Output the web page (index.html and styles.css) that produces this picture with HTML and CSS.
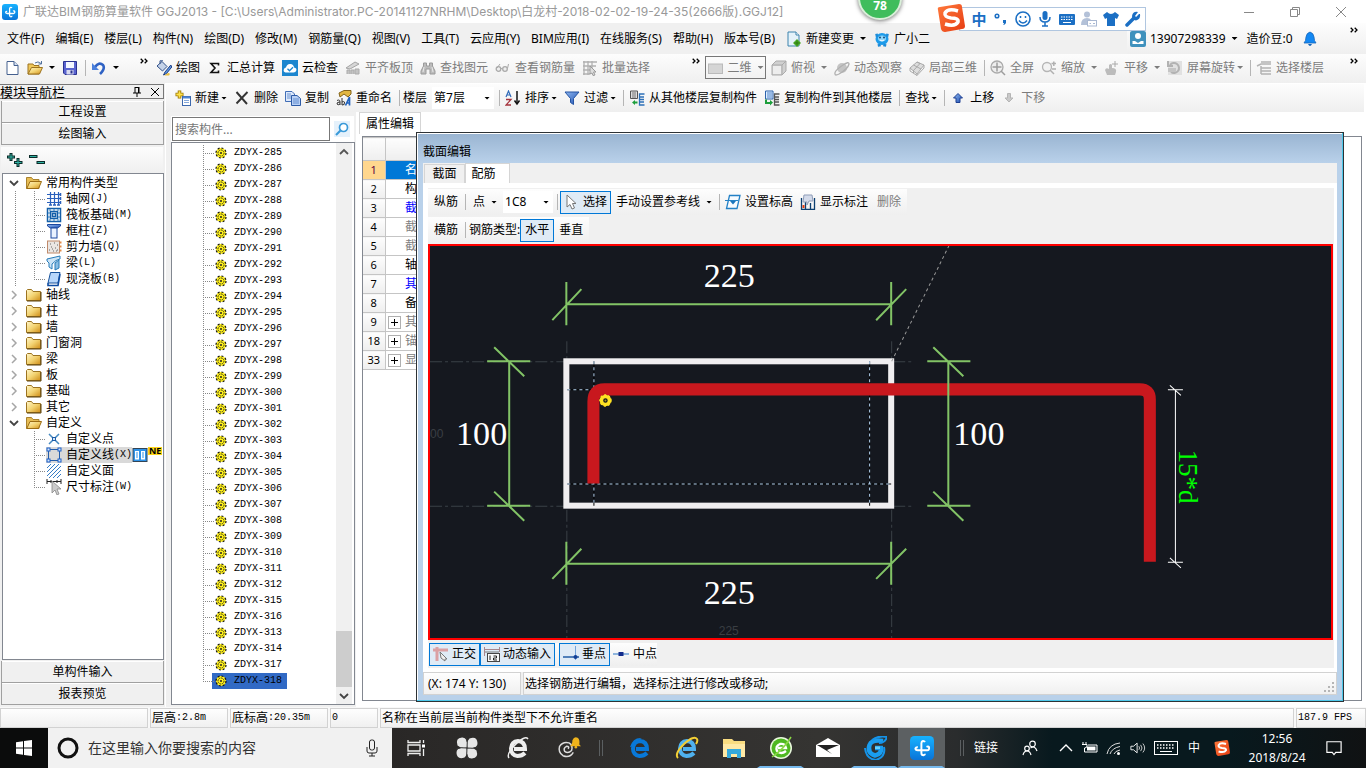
FILE: index.html
```html
<!DOCTYPE html>
<html lang="zh-CN">
<head>
<meta charset="utf-8">
<title>广联达BIM钢筋算量软件 GGJ2013</title>
<link rel="stylesheet" href="styles.css">
</head>
<body>
<svg class="defs" aria-hidden="true">
  <defs>
    <linearGradient id="gold" x1="0" y1="0" x2="1" y2="1"><stop offset="0" stop-color="#fff6c8"/><stop offset=".5" stop-color="#f3d372"/><stop offset="1" stop-color="#cf8d17"/></linearGradient>
    <linearGradient id="steel" x1="0" y1="0" x2="1" y2="1"><stop offset="0" stop-color="#8fb8f0"/><stop offset="1" stop-color="#1f4fb0"/></linearGradient>
    <linearGradient id="sky" x1="0" y1="0" x2="0" y2="1"><stop offset="0" stop-color="#17b2ff"/><stop offset="1" stop-color="#0a74d8"/></linearGradient>
    <linearGradient id="orange" x1="0" y1="0" x2="1" y2="1"><stop offset="0" stop-color="#ff7a3c"/><stop offset="1" stop-color="#e63c12"/></linearGradient>
  </defs>
  <symbol id="logo" viewBox="0 0 16 16"><rect width="16" height="16" rx="3" fill="url(#sky)"/><path d="M10 4Q9.500 3.200 8.600 3.300Q7.600 3.500 7.600 4.800V11.300Q7.600 12.800 9 12.800Q10 12.600 10 11.800M3.600 8Q3.600 9.500 5.200 9.500H11.500Q13 9.500 12.700 7.500Q12.300 6.600 11 7.200M3.600 8.200Q4 7.300 5.200 7.500" fill="none" stroke="#fff" stroke-width="1.300"/></symbol>
  <symbol id="new" viewBox="0 0 16 16"><path d="M3 1.500H10L14 5.500V14.500H3Z" fill="#fff" stroke="#45608f"/><path d="M10 1.500V5.500H14" fill="#d6e2f4" stroke="#45608f"/></symbol>
  <symbol id="open" viewBox="0 0 16 16"><path d="M1 14V4H6L7 5.500H12V14Z" fill="#f0c85a" stroke="#9c7320"/><path d="M1 14L4.500 7.500H15.500L12.500 14Z" fill="url(#gold)" stroke="#9c7320"/><path d="M8 3Q11 .5 14 3.500M14.500 1V4H11.500" fill="none" stroke="#51709c"/></symbol>
  <symbol id="save" viewBox="0 0 16 16"><path d="M1.500 1.500H14.500V14.500H3L1.500 13Z" fill="#5a64d0" stroke="#2b3290"/><rect x="4" y="2" width="8" height="6" fill="#f4f7ff"/><rect x="4.500" y="10" width="7" height="4.500" fill="#d9dcf0"/><rect x="8.500" y="10.500" width="2" height="3" fill="#2b3290"/></symbol>
  <symbol id="undo" viewBox="0 0 16 16"><path d="M4 7Q8 1.500 12 5Q14.500 8.500 9 14" fill="none" stroke="#2f62c4" stroke-width="2.600"/><path d="M1 3V10H8Z" fill="#4b80dc"/></symbol>
  <symbol id="draw" viewBox="0 0 16 16"><path d="M1 6L6 1.500L11 6.500L6.500 11Z" fill="#c4d2e8" stroke="#31518a"/><path d="M4 4V.8H7" fill="none" stroke="#31518a"/><path d="M14.800 5L9 12L7.500 15L10.500 13.500L15.800 7Z" fill="#5d94df" stroke="#1d3f86"/><path d="M12 13Q15 13 13 15.500H8" fill="#eabf43"/></symbol>
  <symbol id="sum" viewBox="0 0 16 16"><path d="M11.500 5.500V3.500H4L8 8L4 12.500H11.500V10.500" fill="none" stroke="#111" stroke-width="1.600"/></symbol>
  <symbol id="cloud" viewBox="0 0 16 16"><rect width="16" height="16" fill="#1c86cf"/><path d="M3.500 12.500Q.8 11.500 2 9Q2.500 7.500 4 7.500Q5 3.500 8.500 4Q11.500 4.300 12 7.500Q15 8 14.300 10.500Q13.800 12.500 11.500 12.500Z" fill="#fff"/><path d="M5.500 8.800L7.500 10.800L11 7.300" fill="none" stroke="#1c86cf" stroke-width="1.300"/></symbol>
  <symbol id="align" viewBox="0 0 16 16"><path d="M1 8L10 2L14 4L5 9Z" fill="#d6d6d6" stroke="#a5a5a5"/><path d="M2 14V10H5V14M6 14V10H9V14M10 14V9H14V14Z" fill="#c3c3c3" stroke="#ababab"/></symbol>
  <symbol id="find" viewBox="0 0 16 16"><path d="M3.500 3H6.500V6H9.500V3H12.500V6L15 11V14H10V9H6V14H1V11L3.500 6Z" fill="#bcbcbc" stroke="#9b9b9b"/><path d="M4 7L3 12M12 7L13 12" stroke="#e8e8e8"/></symbol>
  <symbol id="glasses" viewBox="0 0 16 16"><circle cx="3.500" cy="9" r="2.300" fill="#eee" stroke="#aaa" stroke-width="1.300"/><circle cx="10" cy="9" r="2.300" fill="#eee" stroke="#aaa" stroke-width="1.300"/><path d="M6 8.500H7.500M2 8L5 4M12.500 8.500L13.500 4" fill="none" stroke="#aaa"/></symbol>
  <symbol id="batch" viewBox="0 0 16 16"><path d="M2 1V15M6 1V15M10 1V9M1 2H15M1 6H14M1 10H8M1 14H8" stroke="#b1b1b1" stroke-width="1.300"/><path d="M8 6L14 12L11.500 12L13 15L11 15.500L10 13L8 14Z" fill="#ddd" stroke="#999"/></symbol>
  <symbol id="plane" viewBox="0 0 16 16"><rect x="1.500" y="4" width="14" height="9.500" fill="#d5d5d5" stroke="#bababa"/></symbol>
  <symbol id="cube" viewBox="0 0 16 16"><path d="M1 5L5 1H15V11L11 15H1Z" fill="#d0d0d0" stroke="#ababab"/><path d="M1 5H11V15M11 5L15 1" fill="none" stroke="#aaa"/><rect x="2" y="6" width="8" height="8" fill="#ededed"/></symbol>
  <symbol id="orbit" viewBox="0 0 16 16"><circle cx="8" cy="8" r="5" fill="#c4c4c4"/><path d="M1 14Q0 11 9 5Q15 1 15 4Q14 9 5 14Q1 16 1 14Z" fill="none" stroke="#b0b0b0" stroke-width="1.300"/></symbol>
  <symbol id="part" viewBox="0 0 16 16"><path d="M1 8L8 2L15 5L8 14Z" fill="#ddd" stroke="#aaa"/><path d="M1 8V11L8 15.500L15 8V5M4.500 5L12 9M8 2L11 3.500L4 11M8 14V15.500M4.500 10V13" fill="none" stroke="#aaa"/></symbol>
  <symbol id="full" viewBox="0 0 16 16"><circle cx="7" cy="7" r="6" fill="#eee" stroke="#aaa" stroke-width="1.300"/><path d="M7 2.500V11.500M2.500 7H11.500M11 11L15 15" stroke="#9d9d9d" stroke-width="1.500"/></symbol>
  <symbol id="scale" viewBox="0 0 16 16"><circle cx="6" cy="7" r="4.500" fill="#f3f3f3" stroke="#b5b5b5" stroke-width="1.300"/><path d="M9 10L13 14M10.500 3.500H15M12.800 1.500V6M11 9H15" stroke="#b0b0b0" stroke-width="1.500"/></symbol>
  <symbol id="pan" viewBox="0 0 16 16"><path d="M3 15L1 10Q2 7 5 9V5Q7 3 8 5V8Q13 8 12 12L11 15Z" fill="#bcbcbc"/><path d="M11 1V7M8 4H14" stroke="#aaa"/></symbol>
  <symbol id="spin" viewBox="0 0 16 16"><path d="M1 1H15V15H1Z" fill="#e1e1e1"/><path d="M3 5A5 5 0 1 1 4 12M1 1V6H6" fill="none" stroke="#b2b2b2" stroke-width="2"/><path d="M5 8H9V12H1V8" fill="#c4c4c4"/></symbol>
  <symbol id="floor" viewBox="0 0 16 16"><path d="M5 2H15M1 6L5 4H15M5 8H15M5 11H15M5 14H15M5 6V14" fill="none" stroke="#b3b3b3" stroke-width="1.500"/></symbol>
  <symbol id="doc-add" viewBox="0 0 16 16"><path d="M2 1H10L13 4V15H2Z" fill="#e4f2fa" stroke="#3c83ad"/><path d="M10 1V4H13" fill="#fff" stroke="#3c83ad"/><path d="M11 8L15 12L11 16L7 12Z" fill="#4dac27"/><path d="M11 9.500V14.500M8.500 12H13.500" stroke="#2c7b12"/></symbol>
  <symbol id="mascot" viewBox="0 0 16 16"><ellipse cx="8" cy="8" rx="6.500" ry="6" fill="#1d9bea"/><path d="M1.500 4.500L4 4M14.500 4.500L12 4M5 13L5.500 15.500M11 13L10.500 15.500" stroke="#1d8bd8" stroke-width="3"/><ellipse cx="8" cy="7.500" rx="4" ry="3" fill="#8fd6fb"/><circle cx="6" cy="6.500" r="1" fill="#124a7d"/><circle cx="10" cy="6.500" r="1" fill="#124a7d"/><path d="M6 9Q8 11 10 9" fill="none" stroke="#fff"/></symbol>
  <symbol id="user" viewBox="0 0 16 16"><rect width="16" height="16" rx="2" fill="#3f91bd"/><circle cx="8" cy="5" r="3" fill="#fff"/><path d="M2.500 13V10H5L8 12L11 10H13.500V13Z" fill="#fff"/></symbol>
  <symbol id="bell" viewBox="0 0 16 16"><path d="M2 12Q4 10 4 6Q4.500 2 8 1Q11.500 2 12 6Q12 10 14 12Z" fill="#1388f3" stroke="#1565b9" stroke-width=".8"/><path d="M6 13H10Q8 17 6 13Z" fill="#1565b9"/></symbol>
  <symbol id="add-item" viewBox="0 0 16 16"><path d="M4.500 .5V8.500M.5 4.500H8.500" stroke="#9a7600" stroke-width="3.500"/><path d="M4.500 1.300V7.700M1.300 4.500H7.700" stroke="#ffe24a" stroke-width="1.800"/><rect x="7.500" y="6.500" width="8" height="9" fill="#fff" stroke="#3c68ad"/><path d="M8 7.500H15" stroke="#4d84d5" stroke-width="2"/><path d="M9 10.500H14M9 12.500H14" stroke="#86a8da"/></symbol>
  <symbol id="del" viewBox="0 0 16 16"><path d="M2.500 2L13 14M13.500 2L2.500 13.500" stroke="#333" stroke-width="1.900"/></symbol>
  <symbol id="copy" viewBox="0 0 16 16"><path d="M.5 1.500H7L9.500 4V11.500H.5Z" fill="#dce8fb" stroke="#416eb6"/><path d="M6.500 5.500H12L15.500 8.500V15.500H6.500Z" fill="#b8d0f5" stroke="#2c5aa6"/><path d="M8 9H14M8 11H14M8 13H14M2 4H6M2 6H6M2 8H6" stroke="#4e7dc5" stroke-width=".8"/></symbol>
  <symbol id="rename" viewBox="0 0 16 16"><path d="M3 3L8 .5H15V4L12 7L8 4L4 7Z" fill="#e2b742" stroke="#83631a"/><path d="M1 10.500Q4 9 4 12V15M4 12Q.5 12 1 14Q2 15.500 4 14M6 8V15Q9 15.500 8.500 12Q7.500 11 6 12" fill="none" stroke="#333"/><path d="M9.500 15.500L13.500 7V15.500M10.500 13H13.500" fill="none" stroke="#2364be" stroke-width="1.700"/></symbol>
  <symbol id="sort" viewBox="0 0 16 16"><path d="M1 7L3.500 1L6 7M2 5H5" fill="none" stroke="#316bb9" stroke-width="1.200"/><path d="M1 9.500H6L1 15H6" fill="none" stroke="#a5333d" stroke-width="1.300"/><path d="M12 1V13" stroke="#111" stroke-width="1.500"/><path d="M9.500 10.500L12 14L14.500 10.500" fill="none" stroke="#111" stroke-width="1.500"/></symbol>
  <symbol id="funnel" viewBox="0 0 16 16"><path d="M1 2H15L9.500 8.500V14.500L6.500 12.500V8.500Z" fill="url(#steel)" stroke="#2453a2"/></symbol>
  <symbol id="floor-in" viewBox="0 0 16 16"><path d="M1.500 1H8.500V8.500H1.500Z" fill="#ddd" stroke="#555"/><path d="M3 3H7M3 5H7M3 7H7" stroke="#777"/><path d="M15.500 4H10.500V15H15.500M10 7H15M10 9.500H15M10 12H15" fill="none" stroke="#2d70b8" stroke-width="1.300"/><path d="M3 12.500L6 10V11.500H8.500V13.500H6V15Z" fill="#1e9f3c"/></symbol>
  <symbol id="floor-out" viewBox="0 0 16 16"><path d="M1.500 1H9V9H1.500Z" fill="#dfeeff" stroke="#2c62ac"/><path d="M3 3H8M3 5H8M3 7H8" stroke="#4e83c9"/><path d="M15.500 4H10.500V15H15.500M10.500 7H15M10.500 9.500H15M10.500 12H15" fill="none" stroke="#555" stroke-width="1.300"/><path d="M9 12.500L6 10V12H3V9.500H1V14H6V15.500Z" fill="#1e9f3c"/></symbol>
  <symbol id="up" viewBox="0 0 16 16"><path d="M8 3.500L12.500 8H10V12.500H6V8H3.500Z" fill="url(#steel)" stroke="#1d3f92"/></symbol>
  <symbol id="down" viewBox="0 0 16 16"><path d="M8 12L12 8H9.500V3.500H6.500V8H4Z" fill="#c9c9c9" stroke="#b5b5b5"/></symbol>
  <symbol id="folder-open" viewBox="0 0 16 16"><path d="M.5 13.500V2.500H5.500L7 4.500H13V13.500Z" fill="#e7bd55" stroke="#a9822e"/><path d="M.8 13.500L4 6.500H15.500L12.500 13.500Z" fill="url(#gold)" stroke="#9c6d14"/></symbol>
  <symbol id="folder" viewBox="0 0 16 16"><path d="M.5 3.500L1.500 2.500H5.500L7 4.500H14.500V13.500H.5Z" fill="url(#gold)" stroke="#9c7320"/><path d="M1 14H15V5" fill="none" stroke="#5d430d"/></symbol>
  <symbol id="grid" viewBox="0 0 16 16"><path d="M4.500 1V14M8.500 1V14M12.500 1V14M1 3.500H15M1 7.500H15M1 11.500H15" stroke="#2a60bc" stroke-width="1.200"/><path d="M3 14H6M7 14H10M11 14H14M14.500 2V5M14.500 6V9M14.500 10V13" stroke="#2a60bc" stroke-width="1.500"/></symbol>
  <symbol id="raft" viewBox="0 0 16 16"><path d="M1.500 1.500H14.500V14.500H1.500ZM4.500 4.500H11.500V11.500H4.500ZM6.500 6.500H9.500V9.500H6.500Z" fill="none" stroke="#145fa8" stroke-width="1.500"/><path d="M3 3H13V13H3Z" fill="none" stroke="#2b7ec4" stroke-dasharray="2 2"/></symbol>
  <symbol id="column" viewBox="0 0 16 16"><path d="M1.500 1.500H14.500V3L11.500 5H4.500L1.500 3Z" fill="url(#steel)" stroke="#1b48a0"/><rect x="5" y="5" width="6" height="10" fill="#e9f2ff" stroke="#1b48a0"/></symbol>
  <symbol id="wall" viewBox="0 0 16 16"><rect x="1.500" y="2" width="12" height="12" fill="#eae6e3" stroke="#c08a6a"/><path d="M4 5H5M8 4H9M11 6H12M5 8H6M9 9H10M3 11H4M7 12H8M11 11H12M6 10H7M10 12H11" stroke="#666"/><path d="M14 3.500H15.500M14 7.500H15.500M14 11.500H15.500" stroke="#e38b48" stroke-width="2"/></symbol>
  <symbol id="beam" viewBox="0 0 16 16"><path d="M1 4L14 1V4L10 5.500L6 9V14L3 12V8L1 6Z" fill="#cce4f6" stroke="#277bb8"/><path d="M9 8L13 5V13L9 15Z" fill="#89bde3" stroke="#277bb8"/></symbol>
  <symbol id="slab" viewBox="0 0 16 16"><path d="M4.500 1.500H14L12 12H2Z" fill="#b7d6fb" stroke="#16519b"/><path d="M2 12V14.500H12L14 3" fill="none" stroke="#0d4ba2" stroke-width="1.600"/></symbol>
  <symbol id="cross" viewBox="0 0 16 16"><path d="M3 3L13 13M13 3L3 13" stroke="#478ac0" stroke-width="1.500"/><rect x="6.500" y="6.500" width="3" height="3" fill="#cfe5fa" stroke="#1d5da8"/></symbol>
  <symbol id="line" viewBox="0 0 16 16"><rect x="2.500" y="2.500" width="11" height="11" fill="#d9d9d9" stroke="#265da8"/><g fill="#d5e6fa" stroke="#1b5fc8"><rect x="1" y="1" width="3" height="3"/><rect x="12" y="1" width="3" height="3"/><rect x="1" y="12" width="3" height="3"/><rect x="12" y="12" width="3" height="3"/></g></symbol>
  <symbol id="hatch" viewBox="0 0 16 16"><path d="M1 5L5 1M1 9L9 1M1 13L13 1M3 15L15 3M7 15L15 7M11 15L15 11" stroke="#357cc5"/></symbol>
  <symbol id="dim" viewBox="0 0 16 16"><path d="M1 0V5M15 0V5M1 2.500H15M5 1V4M11 1V4" stroke="#222"/><path d="M6 2V14L9 11L11 16L13 15L11 10H15Z" fill="#ccc" stroke="#888" stroke-width=".8"/></symbol>
  <symbol id="gear" viewBox="0 0 12 12"><circle cx="6" cy="6" r="5" fill="#fff01a" stroke="#111" stroke-width="1.200" stroke-dasharray="2 1.900"/><circle cx="6" cy="6" r="3" fill="none" stroke="#222" stroke-width=".9" stroke-dasharray="1.600 .7"/><circle cx="6" cy="6" r="1" fill="#222"/></symbol>
  <symbol id="arrow" viewBox="0 0 16 16"><path d="M3 1V13L6 10.500L8 15L10.500 14L8.500 9.500H12Z" fill="#fff" stroke="#777"/></symbol>
  <symbol id="level" viewBox="0 0 16 16"><path d="M4.500 1.500H15L12 14.500H1.500Z" fill="#f7fbff" stroke="#2381c6" stroke-width="1.300"/><path d="M0 6.500H13" stroke="#2381c6"/><path d="M5 7H11L8 10.500Z" fill="#1a75bd"/></symbol>
  <symbol id="mark" viewBox="0 0 16 16"><path d="M1.500 4V15.500H14.500V4M5.500 8V15M10.500 9V15" fill="none" stroke="#0c3f70" stroke-width="1.300"/><path d="M4 1H12L13 7H9L7 11V8H3Z" fill="#d3daea" stroke="#8f9db8"/><rect x="2.500" y="11" width="2" height="3" fill="#de3b12"/></symbol>
  <symbol id="ortho" viewBox="0 0 16 16"><path d="M4 1V15M0 4H15" stroke="#dba0a3" stroke-width="3"/><path d="M7 6L14 13L12 13V15L8 12Z" fill="#eee" stroke="#777"/></symbol>
  <symbol id="dyn" viewBox="0 0 16 16"><path d="M.5 1V10M15.500 1V6M.5 3.500H15.500" stroke="#a9868c"/><path d="M1 6H15" stroke="#777"/><rect x="3.500" y="7.500" width="12" height="8" fill="#f9f9f9" stroke="#444"/><path d="M6 9.500V14M9.500 10H12.500V12H9.500V14H13" fill="none" stroke="#222"/></symbol>
  <symbol id="perp" viewBox="0 0 16 16"><path d="M12.500 0V14" stroke="#73a4da"/><path d="M0 11H16" stroke="#235da5" stroke-width="1.500"/><circle cx="12.500" cy="11" r="2" fill="#123f96"/></symbol>
  <symbol id="mid" viewBox="0 0 16 16"><path d="M0 8H16" stroke="#6d9fd4" stroke-width="1.500"/><rect x="5.500" y="6" width="5" height="4" fill="#132c8c"/></symbol>
  <symbol id="lens" viewBox="0 0 16 16"><rect width="16" height="16" fill="#e5f1fb"/><circle cx="9.500" cy="6.500" r="4" fill="#fff" stroke="#3a9ad9" stroke-width="1.700"/><path d="M6.500 9.500L2 14" stroke="#3a9ad9" stroke-width="2.200"/></symbol>
  <symbol id="chev-down" viewBox="0 0 10 10"><path d="M1 3L5 7L9 3" fill="none" stroke="#444" stroke-width="1.800"/></symbol>
  <symbol id="chev-up" viewBox="0 0 10 10"><path d="M1 7L5 3L9 7" fill="none" stroke="#555" stroke-width="1.800"/></symbol>
  <symbol id="chev-right" viewBox="0 0 10 10"><path d="M3 1L7 5L3 9" fill="none" stroke="#a6a6a6" stroke-width="1.500"/></symbol>
  <symbol id="more" viewBox="0 0 8 6"><path d="M.7 .7L3 3L.7 5.300M4.700 .7L7 3L4.700 5.300" fill="none" stroke="#000" stroke-width="1.300"/></symbol>
  <symbol id="sogou" viewBox="0 0 28 28"><path d="M1 6Q0 3 3 3L22 0Q25 0 25 3L28 22Q28 25 25 25L8 28Q5 28 4 25Z" fill="url(#orange)"/><path d="M21 7Q11 4 8 9Q7 13 14 14Q22 14 21 18Q18 23 8 20" fill="none" stroke="#fff" stroke-width="3.500"/></symbol>
  <symbol id="browser-e" viewBox="0 0 24 24"><path d="M19 17Q16 20 11.500 20Q5 19 5 12.500Q5.500 5.500 12 5Q19 5.500 19 13H8" fill="none" stroke="currentColor" stroke-width="4"/></symbol>
</svg>

<header class="titlebar">
  <svg class="i16"><use href="#logo"/></svg>
  <h1>广联达BIM钢筋算量软件 GGJ2013 - [C:\Users\Administrator.PC-20141127NRHM\Desktop\白龙村-2018-02-02-19-24-35(2666版).GGJ12]</h1>
  <div class="winctl">
    <button aria-label="最小化"><svg viewBox="0 0 12 12"><path d="M1 6.500H11"/></svg></button>
    <button aria-label="还原"><svg viewBox="0 0 12 12"><path d="M1.500 3.500H8.500V10.500H1.500ZM3.500 3.500V1.500H10.500V8.500H8.500"/></svg></button>
    <button aria-label="关闭"><svg viewBox="0 0 12 12"><path d="M1 1L11 11M11 1L1 11"/></svg></button>
  </div>
</header>

<nav class="menubar">
  <button>文件(F)</button><button>编辑(E)</button><button>楼层(L)</button><button>构件(N)</button><button>绘图(D)</button><button>修改(M)</button><button>钢筋量(Q)</button><button>视图(V)</button><button>工具(T)</button><button>云应用(Y)</button><button>BIM应用(I)</button><button>在线服务(S)</button><button>帮助(H)</button><button>版本号(B)</button>
  <button class="tool"><svg class="i16"><use href="#doc-add"/></svg>新建变更<i class="caret"></i></button>
  <button class="tool mascot"><svg class="i16"><use href="#mascot"/></svg>广小二</button>
  <div class="account">
    <button class="tool"><svg class="i16"><use href="#user"/></svg>13907298339<i class="caret"></i></button>
    <button>造价豆:0</button>
    <button aria-label="通知"><svg class="i16"><use href="#bell"/></svg></button>
    <button class="more" aria-label="更多"><svg><use href="#more"/></svg></button>
  </div>
</nav>

<div class="toolrow">
  <div class="strip quick">
    <button class="tool" aria-label="新建"><svg class="i16"><use href="#new"/></svg></button>
    <button class="tool" aria-label="打开"><svg class="i16"><use href="#open"/></svg><i class="caret"></i></button>
    <button class="tool" aria-label="保存"><svg class="i16"><use href="#save"/></svg></button>
    <i class="sep"></i>
    <button class="tool" aria-label="撤销"><svg class="i16"><use href="#undo"/></svg><i class="caret"></i></button>
    <button class="more" aria-label="更多"><svg><use href="#more"/></svg></button>
  </div>
  <div class="strip actions">
    <button class="tool"><svg class="i16"><use href="#draw"/></svg>绘图</button>
    <button class="tool"><svg class="i16"><use href="#sum"/></svg>汇总计算</button>
    <button class="tool"><svg class="i16"><use href="#cloud"/></svg>云检查</button>
    <button class="tool" disabled><svg class="i16"><use href="#align"/></svg>平齐板顶</button>
    <button class="tool" disabled><svg class="i16"><use href="#find"/></svg>查找图元</button>
    <button class="tool" disabled><svg class="i16"><use href="#glasses"/></svg>查看钢筋量</button>
    <button class="tool" disabled><svg class="i16"><use href="#batch"/></svg>批量选择</button>
    <button class="more" aria-label="更多"><svg><use href="#more"/></svg></button>
  </div>
  <div class="strip views">
    <button class="tool framed" disabled><svg class="i16"><use href="#plane"/></svg>二维<i class="caret"></i></button>
    <button class="tool" disabled><svg class="i16"><use href="#cube"/></svg>俯视<i class="caret"></i></button>
    <button class="tool" disabled><svg class="i16"><use href="#orbit"/></svg>动态观察</button>
    <button class="tool" disabled><svg class="i16"><use href="#part"/></svg>局部三维</button>
    <i class="sep"></i>
    <button class="tool" disabled><svg class="i16"><use href="#full"/></svg>全屏</button>
    <button class="tool" disabled><svg class="i16"><use href="#scale"/></svg>缩放<i class="caret"></i></button>
    <button class="tool" disabled><svg class="i16"><use href="#pan"/></svg>平移<i class="caret"></i></button>
    <button class="tool tight" disabled><svg class="i16"><use href="#spin"/></svg>屏幕旋转<i class="caret"></i></button>
    <i class="sep"></i>
    <button class="tool" disabled><svg class="i16"><use href="#floor"/></svg>选择楼层</button>
    <button class="more" aria-label="更多"><svg><use href="#more"/></svg></button>
  </div>
</div>

<main class="work">
  <aside class="modules">
    <div class="dock"><h2>模块导航栏</h2>
      <button aria-label="固定"><svg viewBox="0 0 10 10"><path d="M3 0V6M7 0V6M3 .5H7M1 6H9M5 6V10M6.500 0V6" fill="none" stroke="#000"/></svg></button>
      <button aria-label="关闭"><svg viewBox="0 0 10 10"><path d="M1 1L9 9M9 1L1 9" stroke="#000"/></svg></button>
    </div>
    <button class="bar">工程设置</button>
    <button class="bar">绘图输入</button>
    <div class="treetools">
      <button aria-label="全部展开"><svg viewBox="0 0 18 16"><g fill="none"><path d="M5 1V9M1 5H9M12 6V15M8 10.500H16.500" stroke="#0b2b29" stroke-width="3"/><path d="M5 2V8M2 5H8M12 7V14M9 10.500H15.500" stroke="#2fb3a3"/></g></svg></button>
      <button aria-label="全部折叠"><svg viewBox="0 0 18 16"><g fill="none"><path d="M1 4.500H9.500M8.500 10.500H17" stroke="#0b2b29" stroke-width="3"/><path d="M2 4.500H8.500M9.500 10.500H16" stroke="#2fb3a3"/></g></svg></button>
    </div>
    <ul class="tree">
      <li><svg class="chev"><use href="#chev-down"/></svg><svg class="i16"><use href="#folder-open"/></svg>常用构件类型</li>
      <li class="kids lined"><ul>
        <li><svg class="i16"><use href="#grid"/></svg>轴网<span class="mono">(J)</span></li>
        <li><svg class="i16"><use href="#raft"/></svg>筏板基础<span class="mono">(M)</span></li>
        <li><svg class="i16"><use href="#column"/></svg>框柱<span class="mono">(Z)</span></li>
        <li><svg class="i16"><use href="#wall"/></svg>剪力墙<span class="mono">(Q)</span></li>
        <li><svg class="i16"><use href="#beam"/></svg>梁<span class="mono">(L)</span></li>
        <li><svg class="i16"><use href="#slab"/></svg>现浇板<span class="mono">(B)</span></li>
      </ul></li>
      <li><svg class="chev"><use href="#chev-right"/></svg><svg class="i16"><use href="#folder"/></svg>轴线</li>
      <li><svg class="chev"><use href="#chev-right"/></svg><svg class="i16"><use href="#folder"/></svg>柱</li>
      <li><svg class="chev"><use href="#chev-right"/></svg><svg class="i16"><use href="#folder"/></svg>墙</li>
      <li><svg class="chev"><use href="#chev-right"/></svg><svg class="i16"><use href="#folder"/></svg>门窗洞</li>
      <li><svg class="chev"><use href="#chev-right"/></svg><svg class="i16"><use href="#folder"/></svg>梁</li>
      <li><svg class="chev"><use href="#chev-right"/></svg><svg class="i16"><use href="#folder"/></svg>板</li>
      <li><svg class="chev"><use href="#chev-right"/></svg><svg class="i16"><use href="#folder"/></svg>基础</li>
      <li><svg class="chev"><use href="#chev-right"/></svg><svg class="i16"><use href="#folder"/></svg>其它</li>
      <li><svg class="chev"><use href="#chev-down"/></svg><svg class="i16"><use href="#folder-open"/></svg>自定义</li>
      <li class="kids"><ul>
        <li><svg class="i16"><use href="#cross"/></svg>自定义点</li>
        <li><span class="picked"><svg class="i16"><use href="#line"/></svg>自定义线<span class="mono">(X)</span></span><svg class="i16 book" viewBox="0 0 16 16"><rect x="1" y="1.500" width="14" height="13" fill="#2f93e8" stroke="#345"/><path d="M3 4H7V12.500H3ZM9 4H13V12.500H9Z" fill="#fff"/><path d="M4 6H6M4 8H6M4 10H6M10 6H12M10 8H12M10 10H12" stroke="#2f93e8"/></svg><b class="ne">NE</b></li>
        <li><svg class="i16"><use href="#hatch"/></svg>自定义面</li>
        <li><svg class="i16"><use href="#dim"/></svg>尺寸标注<span class="mono">(W)</span></li>
      </ul></li>
    </ul>
    <button class="bar">单构件输入</button>
    <button class="bar">报表预览</button>
  </aside>

  <section class="editor">
    <div class="strip edit">
      <button class="tool tight"><svg class="i16"><use href="#add-item"/></svg>新建<i class="caret"></i></button>
      <button class="tool"><svg class="i16"><use href="#del"/></svg>删除</button>
      <button class="tool"><svg class="i16"><use href="#copy"/></svg>复制</button>
      <button class="tool"><svg class="i16"><use href="#rename"/></svg>重命名</button>
      <i class="sep"></i>
      <label for="storey">楼层</label>
      <span class="combo storey"><select id="storey"><option>第7层</option></select><i class="caret"></i></span>
      <i class="sep"></i>
      <button class="tool tight"><svg class="i16"><use href="#sort"/></svg>排序<i class="caret"></i></button>
      <button class="tool tight"><svg class="i16"><use href="#funnel"/></svg>过滤<i class="caret"></i></button>
      <i class="sep"></i>
      <button class="tool"><svg class="i16"><use href="#floor-in"/></svg>从其他楼层复制构件</button>
      <button class="tool"><svg class="i16"><use href="#floor-out"/></svg>复制构件到其他楼层</button>
      <i class="sep"></i>
      <button class="tool tight">查找<i class="caret"></i></button>
      <i class="sep"></i>
      <button class="tool"><svg class="i16"><use href="#up"/></svg>上移</button>
      <button class="tool" disabled><svg class="i16"><use href="#down"/></svg>下移</button>
    </div>
    <div class="panes">
      <div class="parts">
        <form class="search"><input type="text" aria-label="搜索构件" placeholder="搜索构件..."><button type="button" aria-label="搜索"><svg class="i16"><use href="#lens"/></svg></button></form>
        <div class="listbox">
          <ul class="names mono">
            <li><svg><use href="#gear"/></svg><span>ZDYX-285</span></li>
            <li><svg><use href="#gear"/></svg><span>ZDYX-286</span></li>
            <li><svg><use href="#gear"/></svg><span>ZDYX-287</span></li>
            <li><svg><use href="#gear"/></svg><span>ZDYX-288</span></li>
            <li><svg><use href="#gear"/></svg><span>ZDYX-289</span></li>
            <li><svg><use href="#gear"/></svg><span>ZDYX-290</span></li>
            <li><svg><use href="#gear"/></svg><span>ZDYX-291</span></li>
            <li><svg><use href="#gear"/></svg><span>ZDYX-292</span></li>
            <li><svg><use href="#gear"/></svg><span>ZDYX-293</span></li>
            <li><svg><use href="#gear"/></svg><span>ZDYX-294</span></li>
            <li><svg><use href="#gear"/></svg><span>ZDYX-295</span></li>
            <li><svg><use href="#gear"/></svg><span>ZDYX-296</span></li>
            <li><svg><use href="#gear"/></svg><span>ZDYX-297</span></li>
            <li><svg><use href="#gear"/></svg><span>ZDYX-298</span></li>
            <li><svg><use href="#gear"/></svg><span>ZDYX-299</span></li>
            <li><svg><use href="#gear"/></svg><span>ZDYX-300</span></li>
            <li><svg><use href="#gear"/></svg><span>ZDYX-301</span></li>
            <li><svg><use href="#gear"/></svg><span>ZDYX-302</span></li>
            <li><svg><use href="#gear"/></svg><span>ZDYX-303</span></li>
            <li><svg><use href="#gear"/></svg><span>ZDYX-304</span></li>
            <li><svg><use href="#gear"/></svg><span>ZDYX-305</span></li>
            <li><svg><use href="#gear"/></svg><span>ZDYX-306</span></li>
            <li><svg><use href="#gear"/></svg><span>ZDYX-307</span></li>
            <li><svg><use href="#gear"/></svg><span>ZDYX-308</span></li>
            <li><svg><use href="#gear"/></svg><span>ZDYX-309</span></li>
            <li><svg><use href="#gear"/></svg><span>ZDYX-310</span></li>
            <li><svg><use href="#gear"/></svg><span>ZDYX-311</span></li>
            <li><svg><use href="#gear"/></svg><span>ZDYX-312</span></li>
            <li><svg><use href="#gear"/></svg><span>ZDYX-315</span></li>
            <li><svg><use href="#gear"/></svg><span>ZDYX-316</span></li>
            <li><svg><use href="#gear"/></svg><span>ZDYX-313</span></li>
            <li><svg><use href="#gear"/></svg><span>ZDYX-314</span></li>
            <li><svg><use href="#gear"/></svg><span>ZDYX-317</span></li>
            <li class="current"><svg><use href="#gear"/></svg><span>ZDYX-318</span></li>
          </ul>
          <div class="scroll"><button aria-label="向上"><svg><use href="#chev-up"/></svg></button><i class="track"></i><i class="thumb"></i><button aria-label="向下"><svg><use href="#chev-down"/></svg></button></div>
        </div>
      </div>
      <div class="props">
        <button class="proptab">属性编辑</button>
        <div class="sheet">
          <table>
            <colgroup><col class="c-no"><col class="c-exp"><col></colgroup>
            <thead><tr><th></th><th colspan="2"></th></tr></thead>
            <tbody>
              <tr class="on"><th>1</th><td></td><td>名</td></tr>
              <tr><th>2</th><td></td><td>构</td></tr>
              <tr class="blue"><th>3</th><td></td><td>截</td></tr>
              <tr class="dim"><th>4</th><td></td><td>截</td></tr>
              <tr class="dim"><th>5</th><td></td><td>截</td></tr>
              <tr><th>6</th><td></td><td>轴</td></tr>
              <tr class="blue"><th>7</th><td></td><td>其</td></tr>
              <tr><th>8</th><td></td><td>备</td></tr>
              <tr class="dim"><th>9</th><td><button class="plus" aria-label="展开"></button></td><td>其</td></tr>
              <tr class="dim"><th>18</th><td><button class="plus" aria-label="展开"></button></td><td>锚</td></tr>
              <tr class="dim"><th>33</th><td><button class="plus" aria-label="展开"></button></td><td>显</td></tr>
            </tbody>
          </table>
        </div>
      </div>
    </div>
  </section>
</main>

<footer class="status">
  <span class="s1"></span><span class="s2">层高<span class="mono">:2.8m</span></span><span class="s3">底标高<span class="mono">:20.35m</span></span><span class="s4 mono">0</span><span class="grow">名称在当前层当前构件类型下不允许重名</span><span class="s5 mono">187.9 FPS</span>
</footer>

<footer class="taskbar">
  <button class="start" aria-label="开始"><svg viewBox="0 0 16 16"><path d="M0 2.300L7 1.300V7.500H0ZM8 1.100L16 0V7.500H8ZM0 8.500H7V14.700L0 13.700ZM8 8.500H16V16L8 14.900Z" fill="#fff"/></svg></button>
  <label class="ask"><svg viewBox="0 0 22 22"><circle cx="11" cy="11" r="9" fill="none" stroke="#111" stroke-width="3"/></svg><input type="text" aria-label="搜索" placeholder="在这里输入你要搜索的内容"><svg class="mic" viewBox="0 0 14 18"><rect x="4.500" y="1" width="5" height="10" rx="2" fill="none" stroke="#222"/><path d="M2 8V12Q2 14 4 14H10Q12 14 12 12V8M7 14V17M4 17H10" fill="none" stroke="#222"/></svg></label>
  <div class="apps">
    <button aria-label="任务视图"><svg viewBox="0 0 24 24"><path d="M4 4V6.500H16V4M4 9H16V15H4ZM4 20V17.500H16V20M19.500 4V7M19.500 13V20" fill="none" stroke="#eee" stroke-width="1.300"/><rect x="18" y="8.500" width="3" height="3" fill="#fff"/></svg></button>
    <button aria-label="风扇"><svg viewBox="0 0 24 24"><g fill="#e6e6e6"><path id="fan" d="M12 11.500Q6 13 2.500 9.500Q0 2 7 1.500Q13 1 12 11.500Z"/><use href="#fan" transform="rotate(90 12 12)"/><use href="#fan" transform="rotate(180 12 12)"/><use href="#fan" transform="rotate(270 12 12)"/></g><path d="M12 12Q13 6 11 1M12 12Q18 13 23 11M12 12Q11 18 13 23M12 12Q6 11 1 13" fill="none" stroke="#333"/></svg></button>
    <button aria-label="浏览器" class="pale"><svg viewBox="0 0 24 24"><use href="#browser-e"/><path d="M3 22Q0 18 9 9Q19-1 22 3" fill="none" stroke="#eee" stroke-width="1.500"/></svg></button>
    <button aria-label="提醒"><svg viewBox="0 0 28 24"><path d="M13 13Q15 10 11 10Q7 12 9 16Q13 19 17 15Q19 9 14 6Q7 4 3 10Q1 17 7 21Q15 24 19 17" fill="none" stroke="#ddd" stroke-width="1.700"/><path d="M15 10Q18 8 18 3Q20-2 24 0Q27 2 26 8L28 10Z" fill="#f0b41c"/><circle cx="22" cy="11" r="1.500" fill="#f0b41c"/></svg></button>
    <i class="grip"></i>
    <button aria-label="Edge" class="edge"><svg viewBox="0 0 24 24"><use href="#browser-e"/><path d="M2 11Q5 1 14 2Q8 4 7 10" fill="currentColor"/></svg></button>
    <button aria-label="Internet Explorer" class="ie"><svg viewBox="0 0 24 24"><use href="#browser-e"/><path d="M3 22Q-1 18 9 8Q19-1 22 3Q23 5 21 8" fill="none" stroke="#f3cf35" stroke-width="2"/></svg></button>
    <button aria-label="文件资源管理器"><svg viewBox="0 0 24 24"><path d="M1 3H10L12 5H23V21H1Z" fill="#f9dc80"/><path d="M1 8H23V21H1Z" fill="#ffe9a5"/><path d="M5 22V13H19V22H15V18H9V22Z" fill="#35a9dc"/></svg></button>
    <button aria-label="安全浏览器" class="running green"><svg viewBox="0 0 24 24"><circle cx="12" cy="12" r="11" fill="#e9f8dc"/><circle cx="12" cy="12" r="9.500" fill="#4eb821"/><path d="M17 15Q12 19 8 15Q6 10 11 8Q16 7 17 12H9" fill="none" stroke="#fff" stroke-width="2.300"/><path d="M3 21Q15 13 22 1" fill="none" stroke="#8bda44" stroke-width="1.500"/></svg></button>
    <button aria-label="邮件"><svg viewBox="0 0 24 24"><path d="M0 9L12 2L24 9V21H0Z" fill="#fff"/><path d="M1 9H23L11 14L16 18Z" fill="#222"/></svg></button>
    <button aria-label="广联达" class="running"><svg viewBox="0 0 24 24"><path d="M20 5Q9 3 6.500 9Q4 17 12 19.500Q19 18 18 12H12" fill="none" stroke="#199df0" stroke-width="4.500"/><path d="M9 4Q16-1 24 1Q22 7 16 7M2 12Q3 23 13 24Q23 21 21 11" fill="none" stroke="#1593e8" stroke-width="2"/><path d="M12 10.500H17V13H12Z" fill="#65d1ff"/></svg></button>
    <button aria-label="钢筋算量" class="running active"><svg viewBox="0 0 16 16"><use href="#logo"/></svg></button>
  </div>
  <div class="tray">
    <i class="grip"></i><span class="links">链接</span>
    <button aria-label="人脉"><svg viewBox="0 0 16 16"><g fill="none" stroke="#fff" stroke-width="1.200"><circle cx="10.500" cy="4" r="2.800"/><circle cx="5" cy="8.500" r="2.300"/><path d="M1 15Q2 11 5 11Q8 11 9 15M8.500 8Q13 5 15 11"/></g></svg></button>
    <button aria-label="展开托盘"><svg viewBox="0 0 16 16"><path d="M2 11L8 5L14 11" fill="none" stroke="#fff" stroke-width="1.400"/></svg></button>
    <button aria-label="电池"><svg viewBox="0 0 16 16"><path d="M1 2V4M4 2V4M0 4.500H5V6Q5 8 2.500 8V12H15V5H6" fill="none" stroke="#fff"/><rect x="5" y="6.500" width="8.500" height="4" fill="#fff"/></svg></button>
    <button aria-label="网络"><svg viewBox="0 0 16 16"><path d="M1 14Q3 4 14 3M4 14Q6 8 14 6.500M8 14Q9 11 14 10" fill="none" stroke="#ddd"/><circle cx="12.500" cy="13.500" r="1.500" fill="#fff"/></svg></button>
    <button aria-label="音量"><svg viewBox="0 0 18 16"><path d="M1 6H4L8 2.500V13.500L4 10H1Z" fill="none" stroke="#fff"/><path d="M10 6Q11.500 8 10 10M12 4.500Q15 8 12 11.500M14.500 3Q18.500 8 14.500 13" fill="none" stroke="#ddd"/></svg></button>
    <button class="kb" aria-label="触摸键盘"><svg viewBox="0 0 24 14"><rect x=".5" y=".5" width="23" height="13" fill="none" stroke="#fff"/><path d="M3 4H21M3 7H21" stroke="#fff" stroke-dasharray="1.500 1.500" stroke-width="1.500"/><path d="M6 10.500H18" stroke="#fff"/></svg></button>
    <button class="lang">中</button>
    <button class="input" aria-label="搜狗输入法"><svg viewBox="0 0 28 28"><use href="#sogou"/></svg></button>
    <time class="clock">12:56<br>2018/8/24</time>
    <button class="notice" aria-label="操作中心"><svg viewBox="0 0 18 18"><path d="M1 2H17V14H11L9 16.500L7 14H1Z" fill="none" stroke="#fff" stroke-width="1.300"/></svg></button>
  </div>
</footer>

<section class="dialog" role="dialog" aria-labelledby="dlg">
  <h2 id="dlg">截面编辑</h2>
  <div class="inner">
    <div class="tabs"><button>截面</button><button class="sel">配筋</button></div>
    <div class="page">
      <div class="row"><div class="strip bars">
        <button class="flat">纵筋</button><i class="sep"></i><button class="flat pt">点<i class="caret"></i></button>
        <span class="combo rebar"><select aria-label="钢筋规格"><option>1C8</option></select><i class="caret"></i></span><i class="sep"></i>
        <button class="toggle"><svg class="i16"><use href="#arrow"/></svg>选择</button>
        <button class="flat ref">手动设置参考线<i class="caret"></i></button><i class="sep"></i>
        <button class="tool"><svg class="i16"><use href="#level"/></svg>设置标高</button>
        <button class="tool"><svg class="i16"><use href="#mark"/></svg>显示标注</button>
        <button class="flat" disabled>删除</button>
      </div></div>
      <div class="row"><div class="strip bars">
        <button class="flat">横筋</button><i class="sep near"></i><span>钢筋类型:</span><button class="toggle plain">水平</button><button class="flat">垂直</button>
      </div></div>
      <div class="canvas">
        <svg viewBox="430 246 900 391" preserveAspectRatio="xMinYMin slice">
          <g fill="none" stroke="#3a4047" stroke-dasharray="12 3 3 3"><path d="M430 361.500H911M430 505.500H911M566.500 341V637M890.500 341V637"/></g>
          <g class="ghost"><text x="430" y="438">00</text><text x="718" y="634">225</text></g>
          <rect x="566" y="361" width="324" height="144" fill="none" stroke="#f0eef0" stroke-width="6"/>
          <g fill="none" stroke="#000"><path d="M593.500 361V505M868.500 361V505M567 389.500H593M567 483.500H890"/></g>
          <g fill="none" stroke="#b4d2f0" stroke-dasharray="3 3"><path d="M593.500 361V505M868.500 361V505M567 389.500H593M567 483.500H890"/></g>
          <path d="M890.500 361L947.500 246" stroke="#999" stroke-dasharray="3 3"/>
          <path d="M593 483V401Q593 389 604 389H1138Q1148 389 1148 399V561" fill="none" stroke="#c8181e" stroke-width="12"/>
          <circle cx="605" cy="400" r="4" fill="none" stroke="#ffe223" stroke-width="3.500"/><circle cx="605" cy="400" r="5.500" fill="none" stroke="#ffe223" stroke-width="1.500" stroke-dasharray="2 2"/><circle cx="605" cy="400" r="1" fill="#a89422"/>
          <g fill="none" stroke="#82c366" stroke-width="2">
            <path d="M566 304H890M566 282V325M890 282V325M552 320L581 289M875 320L905 289"/>
            <path d="M566 563H890M566 541V584M890 541V584M552 578L581 548M875 578L905 548"/>
            <path d="M509 361V505M487 361H530M487 505H530M494 347L524 376M494 491L524 520"/>
            <path d="M947 361V505M926 361H969M926 505H969M932 347L962 376M932 491L962 520"/>
          </g>
          <path d="M1173.500 389V562M1166 389.500H1181M1166 561.500H1181M1168 385L1179 395M1168 557L1179 567" stroke="#fff"/>
          <g class="dimtext"><text x="703" y="287">225</text><text x="703" y="603">225</text><text x="456" y="445">100</text><text x="952" y="445">100</text></g>
          <text class="hook" transform="translate(1177 449) rotate(90)">15*d</text>
        </svg>
      </div>
      <div class="row"><div class="strip snaps">
        <button class="toggle"><svg class="i16"><use href="#ortho"/></svg>正交</button><button class="toggle"><svg class="i16"><use href="#dyn"/></svg>动态输入</button><button class="toggle gap"><svg class="i16"><use href="#perp"/></svg>垂点</button><button class="tool"><svg class="i16"><use href="#mid"/></svg>中点</button>
      </div></div>
    </div>
    <div class="dstatus"><span class="pos">(X: 174 Y: 130)</span><span class="grow">选择钢筋进行编辑，选择标注进行修改或移动;<svg class="size" viewBox="0 0 12 12"><path d="M8 0H10V2H8ZM4 4H6V6H4ZM8 4H10V6H8ZM0 8H2V10H0ZM4 8H6V10H4ZM8 8H10V10H8Z" fill="#b5b5b5"/></svg></span></div>
  </div>
</section>

<div class="badge">78</div>
<div class="ime">
  <svg class="s" viewBox="0 0 28 28"><use href="#sogou"/></svg>
  <div class="imebar">
    <button>中</button>
    <button aria-label="标点"><svg viewBox="0 0 16 16"><circle cx="4" cy="5" r="1.800" fill="none" stroke="#1b6fc4" stroke-width="1.500"/><path d="M10 9H13V12Q12 14 10 14Q11 13 11 12H10Z" fill="#1b6fc4"/></svg></button>
    <button aria-label="表情"><svg viewBox="0 0 16 16"><circle cx="8" cy="8" r="7" fill="none" stroke="#1b6fc4" stroke-width="1.600"/><path d="M5.500 5V7M10.500 5V7M4 9.500Q8 14.500 12 9.500" fill="none" stroke="#1b6fc4" stroke-width="1.500"/></svg></button>
    <button aria-label="语音"><svg viewBox="0 0 16 16"><rect x="5.500" y="0" width="5" height="9" rx="2.500" fill="#1b6fc4"/><path d="M3 6Q3 11 8 11Q13 11 13 6M8 11V15M5 15H11" fill="none" stroke="#1b6fc4" stroke-width="1.500"/></svg></button>
    <button aria-label="键盘"><svg viewBox="0 0 16 16"><rect x="0" y="3" width="16" height="11" rx="1" fill="#1b6fc4"/><path d="M2 6H14M2 8.500H14" stroke="#fff" stroke-dasharray="1.500 1"/><path d="M4 11.500H12" stroke="#fff"/></svg></button>
    <button aria-label="账户"><svg viewBox="0 0 16 16"><g fill="#b3c1d8"><circle cx="6" cy="3.500" r="3"/><path d="M0 14Q0 7 6 7Q9 7 10 9V14Z"/></g><rect x="6.500" y="9.500" width="9" height="5.500" fill="#fff" stroke="#a9b8d2"/><path d="M8.500 12.500H10M12 12.500H14" stroke="#a9b8d2"/></svg></button>
    <button aria-label="皮肤"><svg viewBox="0 0 16 16"><path d="M4 1Q8 5 12 1L16 4L14 8L12 7V15H4V7L2 8L0 4Z" fill="#1b6fc4"/></svg></button>
    <button aria-label="工具"><svg viewBox="0 0 16 16"><path d="M2 14L9 7" stroke="#1b6fc4" stroke-width="3.500" stroke-linecap="round"/><path d="M14 3L11 6L10 5L13 1Q8 0 7 5Q7 9 11 9.500Q16 8 15 3Z" fill="#1b6fc4"/></svg></button>
  </div>
</div>
</body>
</html>
```
FILE: styles.css
```css
* { box-sizing: border-box; }
html, body { height: 100%; }
body {
  margin: 0;
  display: flex;
  flex-direction: column;
  overflow: hidden;
  background: #f0f0f0;
  color: #000;
  font: 12px/16px "Noto Sans", "Noto Sans CJK SC", sans-serif;
}
button, input, select { font: inherit; color: inherit; border: 0; background: none; padding: 0; margin: 0; border-radius: 0; }
button { display: inline-flex; align-items: center; justify-content: center; white-space: nowrap; }
button:disabled { color: #7c7c7c; }
ul { list-style: none; margin: 0; padding: 0; }
h1, h2 { font-size: 12px; font-weight: normal; margin: 0; }
svg { display: block; flex: none; }
.defs { position: absolute; width: 0; height: 0; }
.i16 { width: 16px; height: 16px; }
.mono { font-family: "Liberation Mono", monospace; font-size: 10px; }
.caret { flex: none; width: 6px; height: 3px; background: currentColor; clip-path: polygon(0 0, 100% 0, 50% 100%); }
.sep { flex: none; width: 1px; height: 16px; background: #b5b5b5; }
.strip { display: flex; align-items: center; background: linear-gradient(#fdfdfd, #efefef); }
.more { align-self: flex-start; margin-top: 4px; }
.more svg { width: 8px; height: 6px; }
.tool { gap: 4px; }
.tool .caret { margin-left: 2px; }
.tool.tight .caret { margin-left: -2px; }

.titlebar { flex: none; display: flex; align-items: center; gap: 5px; height: 23px; padding-left: 2px; background: #fff; }
.titlebar h1 { flex: 1; color: #999; white-space: nowrap; font-family: Inter, "Noto Sans CJK SC", sans-serif; }
.winctl { display: flex; padding-right: 2px; }
.winctl button { width: 46px; }
.winctl svg { width: 12px; height: 12px; fill: none; stroke: #888; }

.menubar { flex: none; display: flex; gap: 11px; height: 31px; padding-left: 7px; align-items: center; }
.menubar .mascot { margin-left: -3px; }
.account { align-self: stretch; margin-left: auto; width: 239px; display: flex; align-items: center; gap: 9px; padding: 0 8px 0 3px; background: linear-gradient(#fdfdfd, #efefef); }
.account .more { margin-left: auto; }

.toolrow { flex: none; display: flex; height: 29px; }
.toolrow .strip { gap: 7px; padding: 0 4px 2px; }
.toolrow .strip > .sep, .edit > .sep { margin-right: -2px; }
.toolrow .more { margin-left: auto; }
.quick { width: 152px; }
.actions { flex: 0 0 552px; }
.toolrow .views { flex: 1; padding-left: 1px; padding-right: 8px; }
.framed { height: 23px; border: 1px solid #777; width: 61px; margin-right: -2px; }

.work { flex: 1; min-height: 0; display: flex; }
.modules { flex: none; width: 166px; display: flex; flex-direction: column; padding: 1px 1px 2px 0; border-right: 1px solid #fff; }
.dock { display: flex; align-items: center; gap: 8px; height: 15px; padding-right: 3px; border: 1px solid #777; border-left: 0; margin-bottom: 2px; }
.dock h2 { flex: 1; font-size: 13px; }
.dock svg { width: 10px; height: 10px; }
.bar { height: 22px; margin-left: 1px; border: solid #a0a0a0; border-width: 0 1px 1px; box-shadow: inset 0 1px #fff; }
.treetools { display: flex; align-items: center; gap: 4px; height: 26px; margin: 2px 1px 0; padding: 0 5px; background: linear-gradient(#fcfcfc, #efefef); }
.treetools svg { width: 18px; height: 16px; }
.tree { flex: 1; min-height: 0; margin: 0 0 1px 2px; padding-top: 1px; border: 1px solid #828790; background: #fff; }
.tree li { display: flex; align-items: center; height: 16px; padding-left: 6px; white-space: nowrap; }
.chev { width: 10px; height: 10px; margin-right: 7px; }
.tree .i16 { margin-right: 4px; }
.tree .kids { height: auto; padding: 0 0 0 31px; }
.tree .lined { background: repeating-linear-gradient(#888 0 1px, transparent 1px 2px) 12px 0 / 1px 100% no-repeat; }
.tree .kids li { padding: 0; }
.tree .kids li::before, .names li::before {
  content: ""; width: 12px; height: 16px; flex: none;
  background: repeating-linear-gradient(#888 0 1px, transparent 1px 2px) 0 0 / 1px 16px no-repeat, repeating-linear-gradient(90deg, #888 0 1px, transparent 1px 2px) 0 8px / 100% 1px no-repeat;
}
.tree .kids li:last-child::before, .names li:last-child::before { background-size: 1px 8px, 100% 1px; }
.picked { display: flex; align-items: center; height: 16px; background: #d9d9d9; }
.tree .book { margin-right: 0; }
.ne { align-self: flex-start; padding: 0 1px; background: #ffd71a; font-size: 9px; line-height: 8px; }

.editor { flex: 1; min-width: 0; display: flex; flex-direction: column; background: #fff; }
.edit { flex: none; height: 28px; gap: 7px; padding-left: 9px; margin: 1px 2px 0 0; }
.edit label { margin-left: -2px; }
.combo { display: flex; align-items: center; background: #fff; }
.combo select { flex: 1; min-width: 0; appearance: none; }
.combo .caret { margin-right: 4px; }
.storey { width: 62px; height: 22px; padding-left: 2px; margin: 0 -2px; }
.panes { flex: 1; min-height: 0; display: flex; }
.parts { flex: none; width: 190px; display: flex; flex-direction: column; padding: 4px 2px 2px 5px; background: #f0f0f0; }
.search { display: flex; gap: 4px; height: 26px; padding: 1px; background: #fff; align-items: center; }
.search input { width: 158px; height: 24px; padding: 0 2px; border: 1px solid #777; }
.search input::placeholder { color: #777; opacity: 1; }
.listbox { flex: 1; min-height: 0; display: flex; width: 184px; border: 1px solid #828790; background: #fff; overflow: hidden; }
.names { flex: 1; padding: 2px 0 0 31px; }
.names li { display: flex; align-items: center; height: 16px; }
.names svg { width: 12px; height: 12px; margin: 0 7px 0 0; }
.names .current { background: linear-gradient(#316ac5, #316ac5) 9px 0 / 75px 16px no-repeat; }
.scroll { width: 16px; margin-right: 2px; display: flex; flex-direction: column; background: #f0f0f0; }
.scroll button { height: 17px; }
.scroll svg { width: 10px; height: 10px; }
.track { flex: 1; }
.thumb { height: 56px; background: #cdcdcd; }
.props { flex: 1; min-width: 0; padding: 0 4px 6px 3px; }
.proptab { height: 22px; width: 62px; border: 1px solid #d5d5d5; border-bottom: 0; }
.sheet { height: calc(100% - 24px); margin: 2px 0 0 3px; border: 1px solid #828790; }
.sheet table { width: 400px; border-collapse: collapse; table-layout: fixed; }
.c-no { width: 22px; }
.c-exp { width: 18px; }
.sheet th, .sheet td { height: 19px; padding: 0; border: 1px solid #c5c5c5; border-left: 0; line-height: 16px; }
.sheet td:nth-child(2) { border-right: 0; }
.sheet th { font-weight: normal; font-size: 11px; background: linear-gradient(#fdfdfd, #eee); }
.sheet thead th { height: 23px; }
.sheet td:last-child { padding-left: 2px; }
.sheet .on th { background: #ffd78e; color: #600040; }
.on td { background: #0078d7; color: #fff; }
.blue td { color: #00f; }
.dim td { color: #808080; }
.plus { width: 13px; height: 13px; margin: 0 0 0 2px; vertical-align: middle; border: 1px solid #b0b0b0; background: linear-gradient(#000, #000) center / 7px 1px no-repeat, linear-gradient(#000, #000) center / 1px 7px no-repeat; }

.status, .dstatus { flex: none; display: flex; gap: 2px; }
.status { height: 21px; padding-top: 1px; background: #f8f8f8; }
.status > span, .dstatus > span { display: flex; align-items: center; padding-left: 1px; border: 1px solid #d2d2d2; background: linear-gradient(#fefefe, #f0f0f0); white-space: nowrap; }
.s1 { width: 148px; } .s2 { width: 78px; } .s3 { width: 98px; } .s4 { width: 48px; } .s5 { width: 70px; }
.status .grow, .dstatus .grow { flex: 1; }

.taskbar { flex: none; display: flex; height: 40px; color: #fff; background: linear-gradient(90deg, #101010, #2a2827 30%, #353432 60%, #2a2c2d 70%, #08191e 77%, #08191e 90%, #101213); }
.start { width: 48px; background: #0b0c0c; }
.start svg { width: 16px; height: 16px; }
.ask { width: 344px; display: flex; align-items: center; gap: 9px; padding: 0 13px 0 9px; background: #f1f1f1; color: #333; }
.ask > svg { width: 22px; height: 22px; }
.ask input { flex: 1; min-width: 0; font-size: 14px; }
.ask input::placeholder { color: #333; opacity: 1; }
.ask .mic { width: 14px; height: 18px; }
.apps { display: flex; align-items: center; margin-left: -2px; }
.apps button { width: 47px; height: 40px; }
.apps button:nth-child(-n+4) { width: 51px; }
.apps button svg { width: 24px; height: 24px; }
.pale { color: #eee; } .edge { color: #0878d8; } .ie { color: #4fb1ee; }
.grip { width: 4px; height: 16px; border: solid #5b5f61; border-width: 0 1px; }
.apps .grip { margin: 0 13px 0 5px; }
.running { border-bottom: 2px solid #76b9ed; border-right: 3px solid transparent; border-left: 3px solid transparent; padding-top: 2px; }
.active { background: #5c6062; }
.tray { flex: 1; display: flex; align-items: center; padding-left: 15px; }
.tray button { width: 24px; height: 40px; }
.tray svg { width: 16px; height: 16px; }
.links { margin: 0 20px 0 10px; }
.tray .links + button { margin-right: 12px; }
.tray .kb { width: 32px; }
.tray .kb svg { width: 24px; height: 14px; }
.tray .input { margin-left: 4px; }
.clock { margin-left: 12px; width: 62px; text-align: center; line-height: 19px; }
.tray .notice { margin-left: 14px; width: 24px; }

.dialog { position: absolute; left: 416px; right: 22px; top: 132px; bottom: 66px; display: flex; flex-direction: column; padding: 1px 6px 6px; border: 1px solid #2d3235; background: linear-gradient(#99b4d1, #b9d1ea 30px); box-shadow: inset -1px -1px #4dc8ea, inset 1px 1px #fff; }
.dialog h2 { flex: none; height: 29px; padding-top: 10px; line-height: 16px; }
.inner { flex: 1; min-height: 0; display: flex; flex-direction: column; background: #f0f0f0; }
.tabs { display: flex; align-items: flex-end; height: 20px; padding-left: 1px; }
.tabs button { width: 41px; height: 19px; border: 1px solid #d5d5d5; border-bottom: 0; }
.tabs .sel { width: 45px; height: 20px; padding-right: 8px; background: #fff; }
.page { flex: 1; min-height: 0; display: flex; flex-direction: column; border: solid #fff; border-width: 5px 3px 4px 5px; }
.row { display: flex; height: 28px; align-items: center; }
.bars { height: 26px; padding: 0 6px; }
.flat { white-space: nowrap; }
.bars > .sep { margin: 0 7px; }
.bars > .sep.near { margin-right: 3px; }
.flat .caret { margin-left: 6px; }
.rebar { width: 50px; height: 22px; padding-left: 2px; margin-left: 6px; }
.bars > .rebar + .sep { margin: 0 2px 0 4px; }
.bars > .ref { margin-left: 5px; }
.bars > .ref + .sep { margin-right: 5px; }
.bars .tool { margin-right: 7px; }
.bars .flat:disabled { margin-left: 2px; }
.toggle { height: 23px; gap: 3px; padding: 0 3px; border: 1px solid #0078d7; background: #dfebf6; }
.plain { padding: 0 4px; }
.toggle + .flat { margin-left: 5px; }
.canvas { flex: 1; min-height: 0; margin-right: 1px; border: 2px solid #f00; background: #15181f; }
.canvas svg { width: 100%; height: 100%; }
.dimtext { fill: #fff; font: 34px "Liberation Serif", serif; }
.hook { fill: #0f0; font: 27px "Liberation Serif", serif; }
.ghost { fill: #3a3e43; font: 12px "Liberation Sans", sans-serif; }
.snaps { padding-left: 1px; }
.snaps .gap { margin-right: 3px; margin-left: 4px; }
.dstatus { height: 23px; }
.pos { width: 98px; }
.dstatus .pos { padding-left: 4px; }
.size { width: 12px; height: 12px; margin-left: auto; align-self: flex-end; }

.badge { position: absolute; left: 858px; top: -24px; width: 44px; height: 44px; padding-top: 20px; border: 2px solid #d9efd9; border-radius: 50%; background: #3fbd5c; box-shadow: 0 1px 4px #777; color: #fff; font-weight: bold; text-align: center; }
.ime { position: absolute; right: 220px; top: 4px; display: flex; }
.ime .s { width: 28px; height: 28px; margin-right: -6px; z-index: 1; }
.imebar { display: flex; align-items: center; height: 24px; margin-top: 3px; padding: 0 1px 0 8px; border: 1px solid #b0c6e0; background: #fff; }
.imebar button { width: 22px; color: #1b6fc4; font-size: 15px; font-weight: bold; }
.imebar svg { width: 16px; height: 16px; }
```
